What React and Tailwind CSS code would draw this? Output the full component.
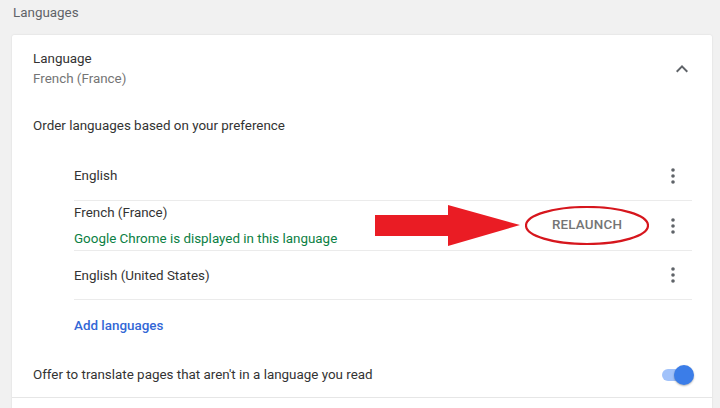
import React from 'react';

const Dots = () => (
    <button className="flex h-8 w-8 items-center justify-center">
        <svg width="4" height="16" viewBox="0 0 4 16" className="fill-[#5f6368]">
            <circle cx="2" cy="2" r="1.8" />
            <circle cx="2" cy="8" r="1.8" />
            <circle cx="2" cy="14" r="1.8" />
        </svg>
    </button>
);

const LanguageRow = ({ name, note, children, height = 'h-[49px]' }) => (
    <div className={`flex items-center border-b border-[#ebebeb] pr-[3px] ${height}`}>
        <div className="flex-1 pt-[1px]">
            <div className="text-[13.4px] leading-5 text-[#333]">{name}</div>
            {note && <div className="mt-[6px] text-[13.4px] leading-5 text-[#0b8043]">{note}</div>}
        </div>
        {children}
        <Dots />
    </div>
);

export default function App() {
    return (
        <div className="h-[408px] w-[720px] overflow-hidden bg-[#f1f1f1] font-['Roboto',sans-serif]">
            <h2 className="h-[35px] pl-[13px] pt-[3px] text-[13.4px] leading-5 text-[#5f6368]">Languages</h2>

            <div className="ml-[12px] w-[700px] rounded-[2px] bg-white shadow-[0_0_2px_rgba(0,0,0,0.12)]">
                <div className="flex items-center pl-[21px] pr-[20px] pt-[14px]">
                    <div className="flex-1">
                        <div className="text-[13.4px] leading-5 text-[#333]">Language</div>
                        <div className="text-[13.4px] leading-5 text-[#757575]">French (France)</div>
                    </div>
                    <svg width="12" height="8" viewBox="0 0 12 8" className="mr-[4px]">
                        <path d="M1.4 7.4 6 2.8l4.6 4.6L12 6 6 0 0 6z" fill="#5f6368" />
                    </svg>
                </div>

                <div className="mt-[27px] pl-[21px] text-[13.4px] leading-5 text-[#333]">
                    Order languages based on your preference
                </div>

                <div className="ml-[62px] mr-[20px] mt-[15px]">
                    <LanguageRow name="English" height="h-[50px]" />
                    <LanguageRow name="French (France)" note="Google Chrome is displayed in this language" height="h-[50px]">
                        <div className="relative mr-[8px] flex h-[39px] w-[124px] items-center justify-center">
                            <span className="text-[13.4px] font-medium tracking-[0.2px] text-[#757575]">RELAUNCH</span>
                            <svg className="absolute inset-0" width="124" height="39" viewBox="0 0 124 39">
                                <ellipse cx="62" cy="19.5" rx="61" ry="18.5" fill="none" stroke="#d6161d" strokeWidth="2.2" />
                            </svg>
                            <svg className="absolute left-[-150px] top-[-1px]" width="146" height="42" viewBox="0 0 146 42">
                                <path d="M0 10h73V0l72 20L73 41V31H0z" fill="#ea1c24" />
                            </svg>
                        </div>
                    </LanguageRow>
                    <LanguageRow name="English (United States)" />

                    <div className="flex h-[52px] items-center">
                        <span className="text-[13.4px] font-medium leading-5 text-[#3367d6]">Add languages</span>
                    </div>
                </div>

                <div className="flex h-[46px] items-center border-b border-[#e6e6e6] pl-[21px] pr-[20px]">
                    <span className="flex-1 text-[13.4px] leading-5 text-[#333]">
                        Offer to translate pages that aren&apos;t in a language you read
                    </span>
                    <div className="relative h-[12px] w-[30px] rounded-full bg-[#a1c2fa]">
                        <div className="absolute right-[-2px] top-[-4px] h-[20px] w-[20px] rounded-full bg-[#3b7de8] shadow-[0_1px_2px_rgba(0,0,0,0.3)]" />
                    </div>
                </div>
                <div className="h-[20px]" />
            </div>
        </div>
    );
}
